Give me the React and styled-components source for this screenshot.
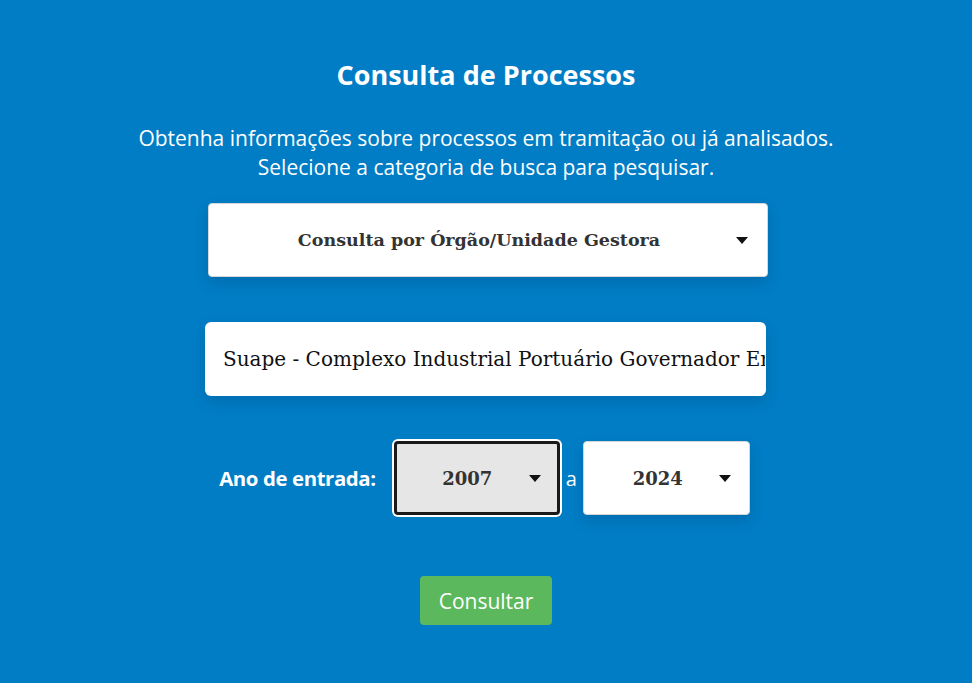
import React from "react";
import styled, { createGlobalStyle } from "styled-components";

const GlobalStyle = createGlobalStyle`
  html, body {
    margin: 0;
    padding: 0;
    background: #007dc5;
  }
  body {
    font-family: "Open Sans", "Noto Sans", sans-serif;
  }
`;

const Page = styled.div`
  min-height: 683px;
  background: #007dc5;
  display: flex;
  flex-direction: column;
  align-items: center;
  padding-top: 55px;
  box-sizing: border-box;
  color: #fff;
`;

const Title = styled.h1`
  margin: 0;
  font-family: "Open Sans", sans-serif;
  font-weight: 700;
  font-size: 27px;
  line-height: 40px;
`;

const Lead = styled.p`
  margin: 29px 0 0;
  font-size: 21px;
  line-height: 29px;
  text-align: center;
  font-weight: 400;
`;

const Form = styled.form`
  display: flex;
  flex-direction: column;
  align-items: center;
  margin-top: 21px;
`;

const SelectBox = styled.div`
  position: relative;
  width: ${(p) => p.$width}px;
  height: 74px;
  box-sizing: border-box;
  margin-left: ${(p) => p.$shift || 0}px;
  background: ${(p) => (p.$focused ? "#e6e6e6" : "#fff")};
  border-radius: 4px;
  border: ${(p) => (p.$focused ? "3px solid #1a1a1a" : "1px solid #d6d6d6")};
  box-shadow: ${(p) =>
    p.$focused
      ? "0 0 0 2px #fff"
      : "0 6px 14px rgba(0, 40, 80, 0.18)"};
  display: flex;
  align-items: center;
  justify-content: center;
  padding-right: ${(p) => p.$padRight}px;
  font-family: "DejaVu Serif", "Liberation Serif", serif;
  font-weight: 700;
  font-size: ${(p) => p.$size}px;
  color: #333;
`;

const Caret = styled.span`
  position: absolute;
  right: ${(p) => p.$right}px;
  top: 50%;
  margin-top: -3px;
  width: 0;
  height: 0;
  border-left: 6px solid transparent;
  border-right: 6px solid transparent;
  border-top: 7px solid #111;
`;

const TextInput = styled.input`
  margin-top: 45px;
  margin-left: -1px;
  width: 561px;
  height: 74px;
  box-sizing: border-box;
  border: none;
  border-radius: 6px;
  background: #fff;
  padding: 0 1px 0 18px;
  font-family: "DejaVu Serif", "Liberation Serif", serif;
  font-size: 20px;
  color: #111;
  box-shadow: 0 6px 14px rgba(0, 40, 80, 0.18);
  outline: none;
`;

const YearRow = styled.div`
  margin-top: 45px;
  display: flex;
  align-items: center;
  margin-left: -3px;
`;

const YearLabel = styled.span`
  font-weight: 700;
  font-size: 20.4px;
  letter-spacing: -0.4px;
  margin-right: 18px;
`;

const Sep = styled.span`
  font-size: 20px;
  margin: 0 6px;
`;

const Button = styled.button`
  margin-top: 61px;
  width: 132px;
  height: 49px;
  border: none;
  border-radius: 4px;
  background: #5cb85c;
  color: #fff;
  font-family: "Open Sans", sans-serif;
  font-size: 21px;
  cursor: pointer;
`;

export default function App() {
  return (
    <>
      <GlobalStyle />
      <Page>
        <Title>Consulta de Processos</Title>
        <Lead>
          Obtenha informações sobre processos em tramitação ou já analisados.
          <br />
          Selecione a categoria de busca para pesquisar.
        </Lead>
        <Form onSubmit={(e) => e.preventDefault()}>
          <SelectBox $width={560} $size={17.5} $padRight={18} $shift={4}>
            Consulta por Órgão/Unidade Gestora
            <Caret $right={19} />
          </SelectBox>
          <TextInput
            readOnly
            value="Suape - Complexo Industrial Portuário Governador Eraldo Gueiros"
          />
          <YearRow>
            <YearLabel>Ano de entrada:</YearLabel>
            <SelectBox $width={166} $size={18} $padRight={19} $focused>
              2007
              <Caret $right={16} />
            </SelectBox>
            <Sep>a</Sep>
            <SelectBox $width={167} $size={18} $padRight={17}>
              2024
              <Caret $right={18} />
            </SelectBox>
          </YearRow>
          <Button type="submit">Consultar</Button>
        </Form>
      </Page>
    </>
  );
}
